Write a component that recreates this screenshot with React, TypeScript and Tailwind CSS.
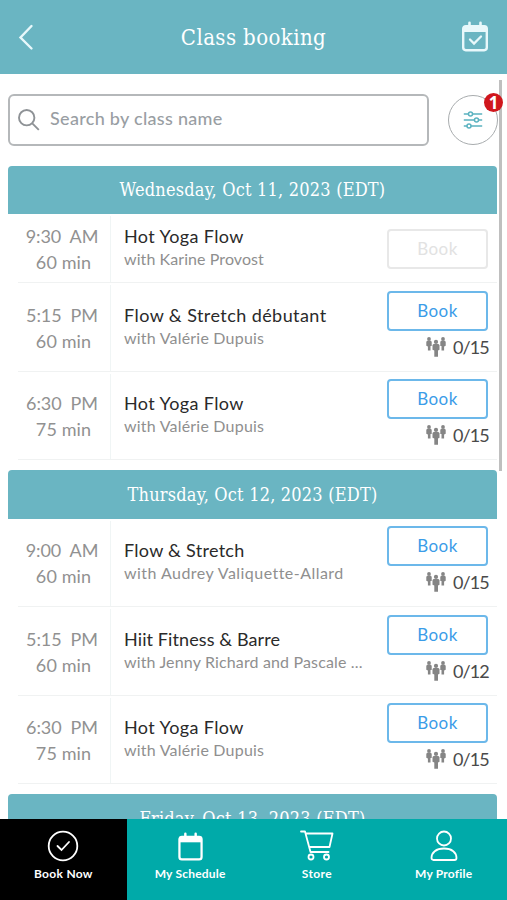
type ClassItem = {
  time: string;
  length: string;
  title: string;
  titleStyle: string;
  teacher: string;
  teacherStyle: string;
  spots?: string;
};

type Day = {
  label: string;
  items: ClassItem[];
};

const days: Day[] = [
  {
    label: 'Wednesday, Oct 11, 2023 (EDT)',
    items: [
      { time: '9:30  AM', length: '60 min', title: 'Hot Yoga Flow', titleStyle: 'tracking-[0.4px]', teacher: 'with Karine Provost', teacherStyle: 'tracking-[0.08px]' },
      { time: '5:15  PM', length: '60 min', title: 'Flow & Stretch débutant', titleStyle: 'tracking-[0.43px]', teacher: 'with Valérie Dupuis', teacherStyle: 'tracking-[0.21px]', spots: '0/15' },
      { time: '6:30  PM', length: '75 min', title: 'Hot Yoga Flow', titleStyle: 'tracking-[0.4px]', teacher: 'with Valérie Dupuis', teacherStyle: 'tracking-[0.21px]', spots: '0/15' },
    ],
  },
  {
    label: 'Thursday, Oct 12, 2023 (EDT)',
    items: [
      { time: '9:00  AM', length: '60 min', title: 'Flow & Stretch', titleStyle: 'tracking-[0.28px]', teacher: 'with Audrey Valiquette-Allard', teacherStyle: 'tracking-[0.46px]', spots: '0/15' },
      { time: '5:15  PM', length: '60 min', title: 'Hiit Fitness & Barre', titleStyle: 'tracking-[0.1px]', teacher: 'with Jenny Richard and Pascale ...', teacherStyle: 'tracking-[0.15px]', spots: '0/12' },
      { time: '6:30  PM', length: '75 min', title: 'Hot Yoga Flow', titleStyle: 'tracking-[0.4px]', teacher: 'with Valérie Dupuis', teacherStyle: 'tracking-[0.21px]', spots: '0/15' },
    ],
  },
  { label: 'Friday, Oct 13, 2023 (EDT)', items: [] },
];

const serif = "font-['DejaVu_Serif_Condensed','DejaVu_Serif',serif]";

function PeopleIcon() {
  return (
    <svg width="20" height="20" viewBox="0 0 20 20" fill="#858585">
      <circle cx="3" cy="2" r="1.9" />
      <path d="M1.2 3.700h3.600l.9 1v4.300h-1.200v4.500H1.900V9.500L.3 8.800V4.700z" />
      <circle cx="17" cy="2" r="1.9" />
      <path d="M15.200 3.700h3.600l.9 1v4.100l-1.600.7v4h-2.600V9h-1.200V4.700z" />
      <circle cx="10" cy="4.900" r="2.100" />
      <path d="M7.600 7h4.800l1.100 1.100v4.700l-1.500.6v6.400H8.300v-6.400l-1.800-.6V8.100z" />
    </svg>
  );
}

function CalendarIcon({ checked = false }: { checked?: boolean }) {
  return (
    <svg width={checked ? 28 : 27} height={checked ? 32 : 30} viewBox="0 0 28 32" fill="none" stroke="currentColor">
      <rect x="2.2" y="5.2" width="23.6" height="24" rx="2.6" strokeWidth="2.4" />
      <path d="M2 5h24v6H2z" fill="currentColor" stroke="none" />
      <path d="M8.500 1.800v5M19.500 1.800v5" strokeWidth="2.600" strokeLinecap="round" />
      {checked && <path d="M9 18.500l4 4 7-7" strokeWidth="2.300" strokeLinecap="round" />}
    </svg>
  );
}

function ClassRow({ item }: { item: ClassItem }) {
  return (
    <div className={`ml-[10px] flex border-b border-[#f0f2f2] ${item.spots ? 'h-[88.5px]' : 'h-[69px]'}`}>
      <div className="mt-0.5 flex w-[93px] shrink-0 flex-col items-center justify-center border-r border-[#f0f5f5] pr-[4px] text-[18px] leading-[26px] text-[#919191]">
        <span className="whitespace-pre tracking-[-0.1px]">{item.time}</span>
        <span className="pl-[3px] tracking-[0.1px]">{item.length}</span>
      </div>
      <div className="flex flex-1 flex-col justify-center pb-[3px] pl-[13px] whitespace-nowrap">
        <div className={`text-[18px] leading-[24px] text-[#2a2a2a] ${item.titleStyle}`}>{item.title}</div>
        <div className={`text-[16px] leading-[21px] text-[#8f8f8f] ${item.teacherStyle}`}>{item.teacher}</div>
      </div>
      <div className={`mr-[9px] flex w-[101px] shrink-0 flex-col items-end ${item.spots ? 'pt-[7.5px]' : 'pt-[15px]'}`}>
        <button
          className={`h-10 w-full rounded-[4px] border-2 text-[17px] tracking-[0.4px] ${
            item.spots ? 'border-[#6cb8ea] text-[#3b9ce8]' : 'border-[#e8e8e8] text-[#e2e2e2]'
          }`}
        >
          Book
        </button>
        {item.spots && (
          <div className="flex items-center gap-[7px] pt-[5px] text-[18px] leading-[22px] text-[#4a4a4a]">
            <PeopleIcon />
            <span className="mr-[-0.9px] tracking-[-0.9px]">{item.spots}</span>
          </div>
        )}
      </div>
    </div>
  );
}

export default function App() {
  return (
    <div className="relative flex h-[900px] w-[507px] flex-col overflow-hidden bg-white font-['Lato',sans-serif]">
      {/* Header */}
      <header className="flex h-[74px] shrink-0 items-center justify-between bg-[#6ab5c2] pr-[18px] pl-[18px] text-[#e8f8fb]">
        <svg width="28" height="28" viewBox="0 0 28 28" fill="none" stroke="currentColor" strokeWidth="2.4" strokeLinecap="round">
          <path d="M13.5 3L2.5 14.5l11 11" />
        </svg>
        <h1 className={`text-[22px] tracking-[0.4px] text-white ${serif}`}>Class booking</h1>
        <CalendarIcon checked />
      </header>

      {/* Search */}
      <div className="flex h-[91.5px] shrink-0 items-start pt-5 pl-2">
        <div className="flex h-[52px] w-[420.5px] items-center rounded-[6px] border-2 border-[#b5b8ba] pl-2 text-[#999ea3]">
          <svg width="22" height="22" viewBox="0 0 22 22" fill="none" stroke="#8e9296" strokeWidth="1.9">
            <circle cx="8.7" cy="8.7" r="7.7" />
            <path d="M14.3 14.3l6.5 6.5" />
          </svg>
          <span className="pb-[3px] pl-[10px] text-[18px] font-medium tracking-[0.3px]">Search by class name</span>
        </div>
        <div className="mt-[1px] ml-[19.5px] flex h-[50px] w-[49.5px] items-center justify-center rounded-full border-[1.5px] border-[#a8acae]">
          <svg width="20" height="18" viewBox="0 0 20 18" stroke="#5bb3c0" strokeWidth="1.5" fill="white">
            <path d="M.8 3h18.400M.8 9h18.400M.8 15h18.400" />
            <circle cx="7.5" cy="3" r="2" />
            <circle cx="13.5" cy="9" r="2" />
            <circle cx="6" cy="15" r="2" />
          </svg>
        </div>
      </div>

      {/* Class list */}
      <main className="mr-[10px] ml-2 flex min-h-0 flex-1 flex-col overflow-hidden">
        {days.map((day) => (
          <section key={day.label} className="mb-[10px] shrink-0">
            <h2 className={`flex h-[48.5px] items-center justify-center rounded-t-[4px] bg-[#6ab5c2] text-[18px] tracking-[0.2px] text-white ${serif}`}>
              {day.label}
            </h2>
            {day.items.map((item) => (
              <ClassRow key={item.time} item={item} />
            ))}
          </section>
        ))}
      </main>

      {/* Bottom nav */}
      <nav className="grid h-[81px] shrink-0 grid-cols-4 bg-[#00aaa9] text-center text-[12px] font-bold text-white">
        <div className="flex flex-col items-center bg-black pt-[11px]">
          <svg width="32" height="32" viewBox="0 0 32 32" fill="none" stroke="currentColor" strokeWidth="1.8" strokeLinecap="round">
            <circle cx="16" cy="16" r="14.3" />
            <path d="M10.500 16l4 4 7.500-8" />
          </svg>
          <span className="pt-[3px] tracking-[0.3px]">Book Now</span>
        </div>
        <div className="flex flex-col items-center pt-[13px]">
          <CalendarIcon />
          <span className="pt-[3px] tracking-[0.2px]">My Schedule</span>
        </div>
        <div className="flex flex-col items-center pt-[11px]">
          <svg width="34" height="32" viewBox="0 0 34 32" fill="none" stroke="currentColor" strokeWidth="1.8" strokeLinecap="round" strokeLinejoin="round">
            <path d="M1 1.500h4l5.500 20.500h18M6 3.500h26.500l-3 13.500H9.500" />
            <circle cx="11" cy="27" r="2.500" />
            <circle cx="26.500" cy="27" r="2.500" />
          </svg>
          <span className="pt-[3px] tracking-[0.4px]">Store</span>
        </div>
        <div className="flex flex-col items-center pt-[11px]">
          <svg width="28" height="32" viewBox="0 0 28 32" fill="none" stroke="currentColor" strokeWidth="1.8" strokeLinejoin="round">
            <circle cx="14" cy="8.500" r="7" />
            <path d="M1.500 28c0-5.500 4.500-9.500 12.500-9.500s12.500 4 12.500 9.500c0 1.200-.8 2-2 2h-21c-1.200 0-2-.8-2-2z" />
          </svg>
          <span className="pt-[3px] tracking-[0.2px]">My Profile</span>
        </div>
      </nav>

      {/* Scrollbar and filter badge */}
      <div className="absolute top-[80px] left-[498.5px] h-[391px] w-[3.5px] bg-[#bfbfbf]" />
      <span className="absolute top-[93px] left-[484px] flex h-[19px] w-[19px] items-center justify-center rounded-full bg-[#d0161c] font-['Open_Sans',sans-serif] text-[17px] font-bold text-white">
        1
      </span>
    </div>
  );
}
